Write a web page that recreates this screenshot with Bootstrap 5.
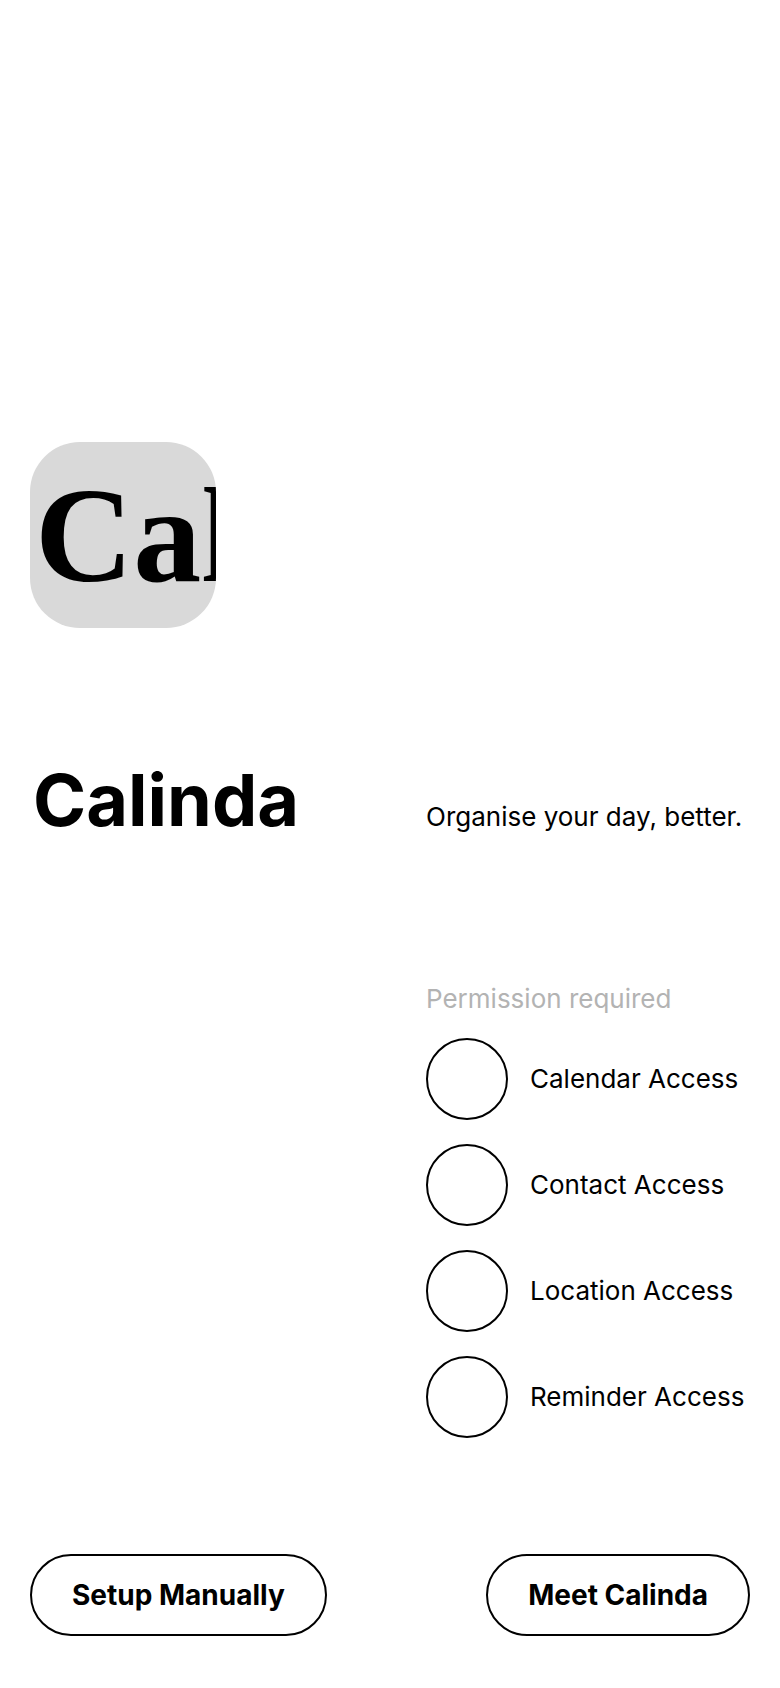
<!DOCTYPE html>
<html lang="en">
<head>
<meta charset="utf-8">
<meta name="viewport" content="width=device-width, initial-scale=1">
<title>Calinda</title>
<link href="https://cdn.jsdelivr.net/npm/bootstrap@5.3.0/dist/css/bootstrap.min.css" rel="stylesheet">
<style>
body { font-family: Inter, sans-serif; font-size: 26px; line-height: 32px; color: #000; background: #fff; }
.welcome { padding: 52px 30px; }
.two-col { display: grid; grid-template-columns: 11fr 9fr; }
.perm-group { grid-column: 2; row-gap: 24px; margin-bottom: 116px; }
.app-icon { width: 186px; height: 186px; border-radius: 50px; background: #d9d9d9; padding-left: 5px; margin-bottom: 132px; font: bold 136px/186px "Liberation Serif", serif; }
.brand-name { font-size: 72px; line-height: 80px; padding-left: 3px; }
.intro { margin-bottom: 144px; }
.perm-title { color: #b3b3b3; font-size: 26px; line-height: 30px; }
.perm { gap: 22px; }
.perm .form-check-input { width: 82px; height: 82px; border: 2px solid #000; border-radius: 50%; background-color: #fff; }
.perm .form-check-input:checked { background-color: #000; }
.btn-outline { --bs-btn-color: #000; --bs-btn-border-color: #000; --bs-btn-hover-color: #fff; --bs-btn-hover-bg: #000; --bs-btn-border-width: 2px; --bs-btn-padding-x: 40px; --bs-btn-padding-y: 22px; --bs-btn-font-size: 28px; --bs-btn-line-height: 34px; --bs-btn-font-weight: 700; }
</style>
</head>
<body>
<main class="welcome d-flex flex-column justify-content-end min-vh-100">
  <div class="app-icon overflow-hidden text-nowrap" aria-hidden="true">Cal</div>
  <header class="intro two-col align-items-baseline">
    <h1 class="brand-name fw-bold mb-0">Calinda</h1>
    <p class="mb-0 text-nowrap">Organise your day, better.</p>
  </header>
  <form class="two-col">
    <fieldset class="perm-group d-grid" aria-labelledby="perm-title">
      <h2 class="perm-title fw-normal mb-0" id="perm-title">Permission required</h2>
      <div class="perm d-flex align-items-center">
        <input class="form-check-input flex-shrink-0 m-0" type="checkbox" id="calendar">
        <label class="text-nowrap" for="calendar">Calendar Access</label>
      </div>
      <div class="perm d-flex align-items-center">
        <input class="form-check-input flex-shrink-0 m-0" type="checkbox" id="contact">
        <label class="text-nowrap" for="contact">Contact Access</label>
      </div>
      <div class="perm d-flex align-items-center">
        <input class="form-check-input flex-shrink-0 m-0" type="checkbox" id="location">
        <label class="text-nowrap" for="location">Location Access</label>
      </div>
      <div class="perm d-flex align-items-center">
        <input class="form-check-input flex-shrink-0 m-0" type="checkbox" id="reminder">
        <label class="text-nowrap" for="reminder">Reminder Access</label>
      </div>
    </fieldset>
  </form>
  <div class="d-flex justify-content-between">
    <button type="button" class="btn btn-outline rounded-pill">Setup Manually</button>
    <button type="button" class="btn btn-outline rounded-pill">Meet Calinda</button>
  </div>
</main>
<script src="https://cdn.jsdelivr.net/npm/bootstrap@5.3.0/dist/js/bootstrap.bundle.min.js"></script>
</body>
</html>
